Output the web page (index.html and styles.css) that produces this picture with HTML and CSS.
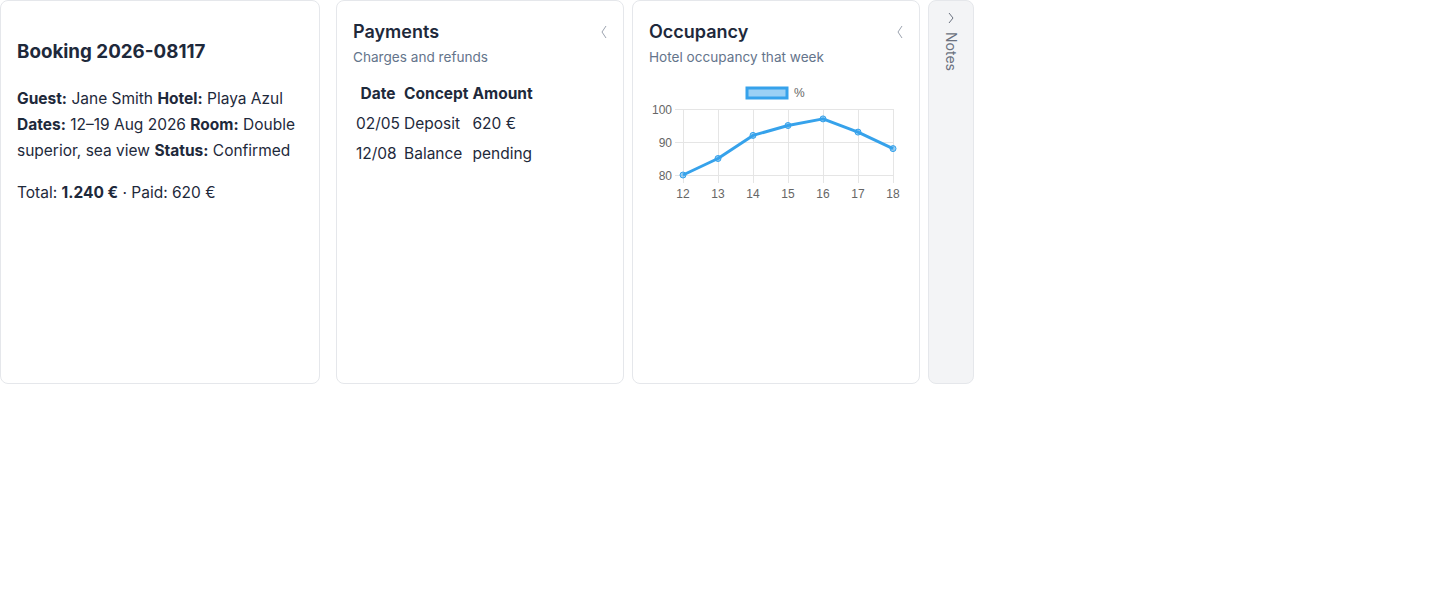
FILE: index.html
```html
<!DOCTYPE html>
<html lang="en">
<head>
  <meta charset="UTF-8">
  <meta name="viewport" content="width=device-width, initial-scale=1.0">
  <title>Booking 2026-08117</title>
  <link rel="stylesheet" href="styles.css">
</head>
<body>
  <div class="layout">
    <div class="card booking">
      <h2>Booking 2026-08117</h2>
      <p><strong>Guest:</strong> Jane Smith <strong>Hotel:</strong> Playa Azul <strong>Dates:</strong> 12–19 Aug 2026 <strong>Room:</strong> Double superior, sea view <strong>Status:</strong> Confirmed</p>
      <p>Total: <strong>1.240 €</strong> · Paid: 620 €</p>
    </div>

    <div class="panels">
      <div class="card panel">
        <div class="panel-head">
          <div>
            <h3>Payments</h3>
            <div class="sub">Charges and refunds</div>
          </div>
          <button class="collapse" title="Collapse">
            <svg width="6" height="14" viewBox="0 0 6 14"><polyline points="5,1 1,7 5,13" fill="none" stroke="#9ca3af" stroke-width="1"/></svg>
          </button>
        </div>
        <table class="payments">
          <tr><th>Date</th><th>Concept</th><th>Amount</th></tr>
          <tr><td>02/05</td><td>Deposit</td><td>620 €</td></tr>
          <tr><td>12/08</td><td>Balance</td><td>pending</td></tr>
        </table>
      </div>

      <div class="card panel">
        <div class="panel-head">
          <div>
            <h3>Occupancy</h3>
            <div class="sub">Hotel occupancy that week</div>
          </div>
          <button class="collapse" title="Collapse">
            <svg width="6" height="14" viewBox="0 0 6 14"><polyline points="5,1 1,7 5,13" fill="none" stroke="#9ca3af" stroke-width="1"/></svg>
          </button>
        </div>
        <svg class="chart" width="254" height="130" viewBox="0 0 254 130">
          <!-- legend -->
          <rect x="98" y="11" width="40" height="10" fill="rgba(54,162,235,0.5)" stroke="#36a2eb" stroke-width="3"/>
          <text x="145" y="20">%</text>
          <!-- grid -->
          <g stroke="#e5e5e5" stroke-width="1">
            <line x1="26" y1="32.5" x2="244" y2="32.5"/>
            <line x1="26" y1="65.5" x2="244" y2="65.5"/>
            <line x1="26" y1="98.5" x2="244" y2="98.5"/>
            <line x1="34.5" y1="32" x2="34.5" y2="106"/>
            <line x1="69.5" y1="32" x2="69.5" y2="106"/>
            <line x1="104.5" y1="32" x2="104.5" y2="106"/>
            <line x1="139.5" y1="32" x2="139.5" y2="106"/>
            <line x1="174.5" y1="32" x2="174.5" y2="106"/>
            <line x1="209.5" y1="32" x2="209.5" y2="106"/>
            <line x1="244.5" y1="32" x2="244.5" y2="106"/>
          </g>
          <g text-anchor="end">
            <text x="23" y="36.5">100</text>
            <text x="23" y="69.5">90</text>
            <text x="23" y="102.5">80</text>
          </g>
          <g text-anchor="middle">
            <text x="34" y="121">12</text>
            <text x="69" y="121">13</text>
            <text x="104" y="121">14</text>
            <text x="139" y="121">15</text>
            <text x="174" y="121">16</text>
            <text x="209" y="121">17</text>
            <text x="244" y="121">18</text>
          </g>
          <polyline points="34,98 69,81.5 104,58.4 139,48.5 174,41.9 209,55.1 244,71.6" fill="none" stroke="#36a2eb" stroke-width="3" stroke-linejoin="round"/>
          <g fill="rgba(54,162,235,0.5)" stroke="#36a2eb" stroke-width="1">
            <circle cx="34" cy="98" r="3"/>
            <circle cx="69" cy="81.5" r="3"/>
            <circle cx="104" cy="58.4" r="3"/>
            <circle cx="139" cy="48.5" r="3"/>
            <circle cx="174" cy="41.9" r="3"/>
            <circle cx="209" cy="55.1" r="3"/>
            <circle cx="244" cy="71.6" r="3"/>
          </g>
        </svg>
      </div>

      <div class="notes-tab">
        <svg width="6" height="12" viewBox="0 0 6 12"><polyline points="1,1 5,6 1,11" fill="none" stroke="#6b7280" stroke-width="1"/></svg>
        <span class="notes-label">Notes</span>
      </div>
    </div>
  </div>
</body>
</html>
```

FILE: styles.css
```css
body {
  margin: 0;
  font-family: 'Inter', 'Noto Sans', sans-serif;
  font-size: 15.5px;
  line-height: 26px;
  color: #1e293b;
  background: #fff;
}

.layout {
  display: flex;
  gap: 16px;
  align-items: flex-start;
}

.card {
  box-sizing: border-box;
  height: 384px;
  border: 1px solid #e5e7eb;
  border-radius: 8px;
  background: #fff;
  padding: 17px 16px 16px;
}

.booking {
  width: 320px;
}

.booking h2 {
  font-size: 18.75px;
  line-height: 28px;
  font-weight: 700;
  margin: 20px 0;
}

.booking p {
  margin: 16px 0;
}

.panels {
  display: flex;
  gap: 8px;
}

.panel {
  width: 288px;
}

.panel-head {
  display: flex;
  justify-content: space-between;
  align-items: flex-start;
  margin-bottom: 11px;
}

.panel-head h3 {
  margin: 0;
  font-size: 18px;
  line-height: 28px;
  font-weight: 600;
}

.sub {
  margin-top: 1px;
  font-size: 13.6px;
  line-height: 20px;
  color: #64748b;
}

.collapse {
  border: none;
  background: none;
  padding: 0;
  margin-top: 7px;
  cursor: pointer;
  line-height: 0;
}

.payments th {
  font-weight: 700;
}

.chart {
  display: block;
  margin-top: -1px;
}

.chart text {
  font-family: 'Liberation Sans', Arial, sans-serif;
  font-size: 12px;
  fill: #666;
}

.notes-tab {
  box-sizing: border-box;
  width: 46px;
  height: 384px;
  border: 1px solid #e5e7eb;
  border-radius: 8px;
  background: #f3f4f6;
  display: flex;
  flex-direction: column;
  align-items: center;
  padding-top: 11px;
  gap: 8px;
  color: #6b7280;
}

.notes-label {
  writing-mode: vertical-rl;
  font-size: 14px;
  line-height: 20px;
}
```
